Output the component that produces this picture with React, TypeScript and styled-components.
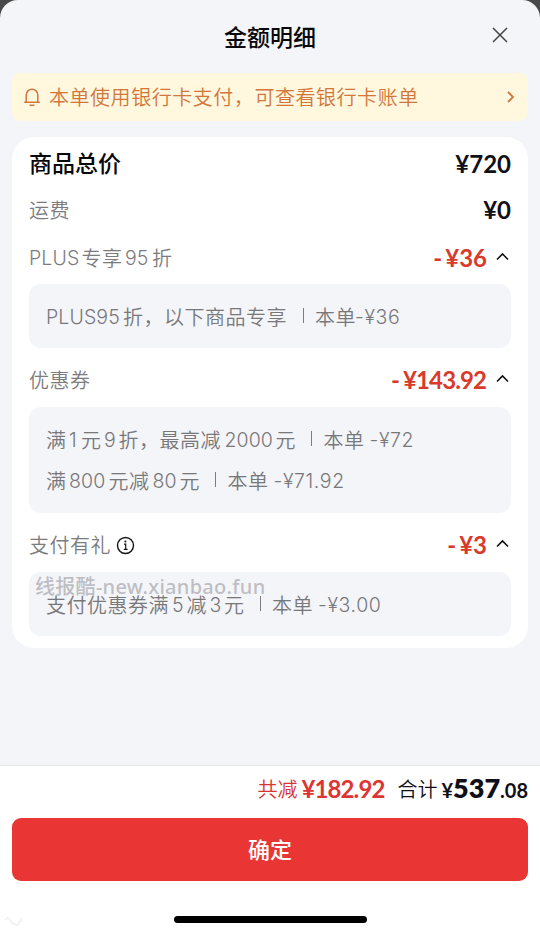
import React from "react";
import styled, { createGlobalStyle } from "styled-components";

const Global = createGlobalStyle`
  * { box-sizing: border-box; }
  body {
    margin: 0;
    background: #48484b;
    font-family: Inter, "Noto Sans CJK SC", sans-serif;
    color: #101018;
  }
`;

const Sheet = styled.main`
  width: 540px;
  height: 934px;
  display: flex;
  flex-direction: column;
  background: #f4f5f9;
  border-radius: 18px 18px 0 0;
  overflow: hidden;
`;

const Header = styled.header`
  height: 73px;
  flex: none;
  display: grid;
  grid-template-columns: 1fr auto 1fr;
  align-items: center;
  padding: 0 31px 2px;
`;

const Title = styled.h1`
  grid-column: 2;
  margin: 0;
  font: 500 23px/34px "Noto Sans CJK SC", sans-serif;
  color: #08080c;
`;

const CloseButton = styled.button`
  justify-self: end;
  width: 18px;
  height: 18px;
  margin-bottom: 2px;
  padding: 0;
  border: 0;
  background: none;
  display: flex;
`;

const Notice = styled.div`
  flex: none;
  height: 48px;
  margin: 0 12px;
  padding: 0 13px 0 11px;
  display: flex;
  align-items: center;
  border-radius: 8px;
  background: #fff8de;
  color: #d2763a;
`;

const NoticeText = styled.span`
  flex: 1;
  margin-left: 8px;
  font: 350 20px/30px "Noto Sans CJK SC", sans-serif;
  letter-spacing: 0.54px;
`;

const Card = styled.section`
  flex: none;
  height: 511px;
  margin: 16px 12px 0;
  padding: 0 17px;
  border-radius: 22px;
  background: #fff;
`;

const Row = styled.div<{ $height: number; $top?: number }>`
  height: ${(p) => p.$height}px;
  padding-top: ${(p) => p.$top ?? 0}px;
  display: flex;
  align-items: center;
`;

const Total = styled.h2`
  margin: 0;
  padding-bottom: 4px;
  flex: 1;
  font: 500 23px/34px "Noto Sans CJK SC", sans-serif;
  color: #08080c;
`;

const Label = styled.div`
  flex: 1;
  display: flex;
  align-items: center;
  color: #7c7c7f;
`;

const Amount = styled.span<{ $red?: boolean; $tight?: boolean }>`
  display: flex;
  align-items: center;
  font: 700 24px/30px Lato, sans-serif;
  letter-spacing: ${(p) => (p.$tight ? -0.9 : 0)}px;
  color: ${(p) => (p.$red ? "#d83b2b" : "#101018")};
`;

const Minus = styled.span`
  width: 8px;
  margin-right: 4px;
`;

const ToggleIcon = styled.svg<{ $gap: number }>`
  margin-left: ${(p) => p.$gap}px;
  margin-right: 1px;
  margin-bottom: 2px;
  display: block;
`;

const DetailBox = styled.div<{ $height: number }>`
  height: ${(p) => p.$height}px;
  padding: 1px 17px 0;
  display: flex;
  flex-direction: column;
  justify-content: center;
  border-radius: 12px;
  background: #f4f5f9;
  color: #78787b;
  position: relative;
`;

const Line = styled.div`
  height: 41px;
  display: flex;
  align-items: center;
`;

const Run = styled.span<{ $width: number; $latin?: boolean; $spacing: number }>`
  width: ${(p) => p.$width}px;
  flex: none;
  white-space: nowrap;
  font: ${(p) =>
    p.$latin ? "350 19.5px/30px Inter, sans-serif" : '350 20px/30px "Noto Sans CJK SC", sans-serif'};
  letter-spacing: ${(p) => p.$spacing}px;
`;

const Divider = styled.span`
  width: 1px;
  height: 15px;
  flex: none;
  margin: 0 11.5px 3px 0;
  background: #7d7d80;
`;

const Watermark = styled.span`
  position: absolute;
  left: 6px;
  top: 0;
  white-space: nowrap;
  font: 500 20px/30px "Noto Sans", "Noto Sans CJK SC", sans-serif;
  letter-spacing: 0.3px;
  color: rgba(165, 165, 170, 0.7);
`;

const Spacer = styled.div`
  flex: 1;
`;

const Footer = styled.footer`
  flex: none;
  height: 169px;
  padding: 0 12px;
  display: flex;
  flex-direction: column;
  border-top: 1px solid #e4e6e9;
  background: #fff;
`;

const Summary = styled.div`
  height: 52px;
  padding-bottom: 6px;
  display: flex;
  align-items: center;
  justify-content: flex-end;
`;

const SummaryLabel = styled.span<{ $red?: boolean }>`
  margin-right: 4px;
  font: 350 20px/30px "Noto Sans CJK SC", sans-serif;
  color: ${(p) => (p.$red ? "#d83232" : "#101018")};
`;

const Saved = styled(Amount)`
  margin-right: 13px;
  color: #df3434;
`;

const Payable = styled.span`
  display: flex;
  align-items: baseline;
  font: 700 20px/34px Lato, sans-serif;
`;

const Whole = styled.span`
  font-size: 27px;
  font-weight: 800;
`;

const ConfirmButton = styled.button`
  height: 63px;
  padding: 0 0 4px;
  border: 0;
  border-radius: 9px;
  background: #e93634;
  color: #fff;
  font: 500 22px/32px "Noto Sans CJK SC", sans-serif;
`;

const BottomArea = styled.div`
  flex: 1;
  display: flex;
  justify-content: center;
  padding-top: 35px;
  position: relative;
`;

const HomeIndicator = styled.div`
  width: 193px;
  height: 7px;
  border-radius: 4px;
  background: #000;
`;

const FaintMark = styled.svg`
  position: absolute;
  left: -8px;
  top: 34px;
`;

type Part = [text: string, width: number];

const LATIN = /^[\x00-\xff]+$/;

function spacingOf(text: string) {
  if (!LATIN.test(text)) return 0.5;
  return text.startsWith("-") ? 0.6 : 0.1;
}

function Runs({ parts }: { parts: Part[] }) {
  return (
    <>
      {parts.map(([text, width], i) =>
        text === "|" ? (
          <Divider key={i} />
        ) : (
          <Run key={i} $width={width} $latin={LATIN.test(text)} $spacing={spacingOf(text)}>
            {text}
          </Run>
        )
      )}
    </>
  );
}

function Discount({ value }: { value: string }) {
  const tight = value.length > 3;
  return (
    <Amount $red $tight={tight}>
      <Minus>-</Minus>¥{value}
      <ToggleIcon
        $gap={tight ? 9 : 8}
        width="15"
        height="10"
        viewBox="0 0 15 10"
        fill="none"
        stroke="#111"
        strokeWidth="1.6"
      >
        <path d="M2 7.5 7.5 2 13 7.5" />
      </ToggleIcon>
    </Amount>
  );
}

export default function App() {
  return (
    <>
      <Global />
      <Sheet>
        <Header>
          <Title>金额明细</Title>
          <CloseButton aria-label="关闭">
            <svg width="18" height="18" viewBox="0 0 18 18" stroke="#444" strokeWidth="1.5">
              <path d="M2 2 16 16M16 2 2 16" />
            </svg>
          </CloseButton>
        </Header>
        <Notice>
          <svg width="18" height="20" viewBox="0 0 18 20" fill="none" stroke="currentColor" strokeWidth="1.5">
            <path d="M1.2 15.2H16.8M3.2 15V8a5.8 5.8 0 0 1 11.6 0v7M6.6 18.2h4.8" />
          </svg>
          <NoticeText>本单使用银行卡支付，可查看银行卡账单</NoticeText>
          <svg width="9" height="14" viewBox="0 0 9 14" fill="none" stroke="currentColor" strokeWidth="1.8">
            <path d="M2 2 7 7 2 12" />
          </svg>
        </Notice>
        <Card>
          <Row $height={53}>
            <Total>商品总价</Total>
            <Amount>¥720</Amount>
          </Row>
          <Row $height={40}>
            <Label>
              <Runs parts={[["运费", 42]]} />
            </Label>
            <Amount>¥0</Amount>
          </Row>
          <Row $height={54} $top={1}>
            <Label>
              <Runs parts={[["PLUS", 52.5], ["专享", 43.5], ["95", 27], ["折", 21]]} />
            </Label>
            <Discount value="36" />
          </Row>
          <DetailBox $height={64}>
            <Line>
              <Runs
                parts={[["PLUS95", 77], ["折，以下商品专享", 179.5], ["|", 0], ["本单", 40], ["-¥36", 50]]}
              />
            </Line>
          </DetailBox>
          <Row $height={59} $top={5}>
            <Label>
              <Runs parts={[["优惠券", 63]]} />
            </Label>
            <Discount value="143.92" />
          </Row>
          <DetailBox $height={106}>
            <Line>
              <Runs
                parts={[
                  ["满", 23], ["1", 12], ["元", 23], ["9", 14.5], ["折，最高减", 106], ["2000", 51],
                  ["元", 35.5], ["|", 0], ["本单", 46], ["-¥72", 50],
                ]}
              />
            </Line>
            <Line>
              <Runs
                parts={[
                  ["满", 23], ["800", 39.5], ["元减", 44], ["80", 27], ["元", 35.5], ["|", 0], ["本单", 46],
                  ["-¥71.92", 75],
                ]}
              />
            </Line>
          </DetailBox>
          <Row $height={59} $top={5}>
            <Label>
              <Runs parts={[["支付有礼", 87]]} />
              <svg width="19" height="19" viewBox="0 0 19 19" fill="none" stroke="#151515" strokeWidth="1.4">
                <circle cx="9.5" cy="9.5" r="8" />
                <path d="M8 8.2h1.7v5M7.8 13.4h3.8" strokeWidth="1.2" />
                <circle cx="9.4" cy="5.5" r="1" fill="#151515" stroke="none" />
              </svg>
            </Label>
            <Discount value="3" />
          </Row>
          <DetailBox $height={64}>
            <Watermark>线报酷-new.xianbao.fun</Watermark>
            <Line>
              <Runs
                parts={[
                  ["支付优惠券满", 126], ["5", 14.5], ["减", 23], ["3", 14.5], ["元", 35.5], ["|", 0],
                  ["本单", 46], ["-¥3.00", 70],
                ]}
              />
            </Line>
          </DetailBox>
        </Card>
        <Spacer />
        <Footer>
          <Summary>
            <SummaryLabel $red>共减</SummaryLabel>
            <Saved $tight>¥182.92</Saved>
            <SummaryLabel>合计</SummaryLabel>
            <Payable>
              ¥<Whole>537</Whole>.08
            </Payable>
          </Summary>
          <ConfirmButton>确定</ConfirmButton>
          <BottomArea>
            <FaintMark width="20" height="14" viewBox="0 0 20 14" fill="none" stroke="#f3f3f3" strokeWidth="2">
              <path d="M1 5q3-4 5 0t7 5q3-1 2-4M17 3v4" />
            </FaintMark>
            <HomeIndicator />
          </BottomArea>
        </Footer>
      </Sheet>
    </>
  );
}
